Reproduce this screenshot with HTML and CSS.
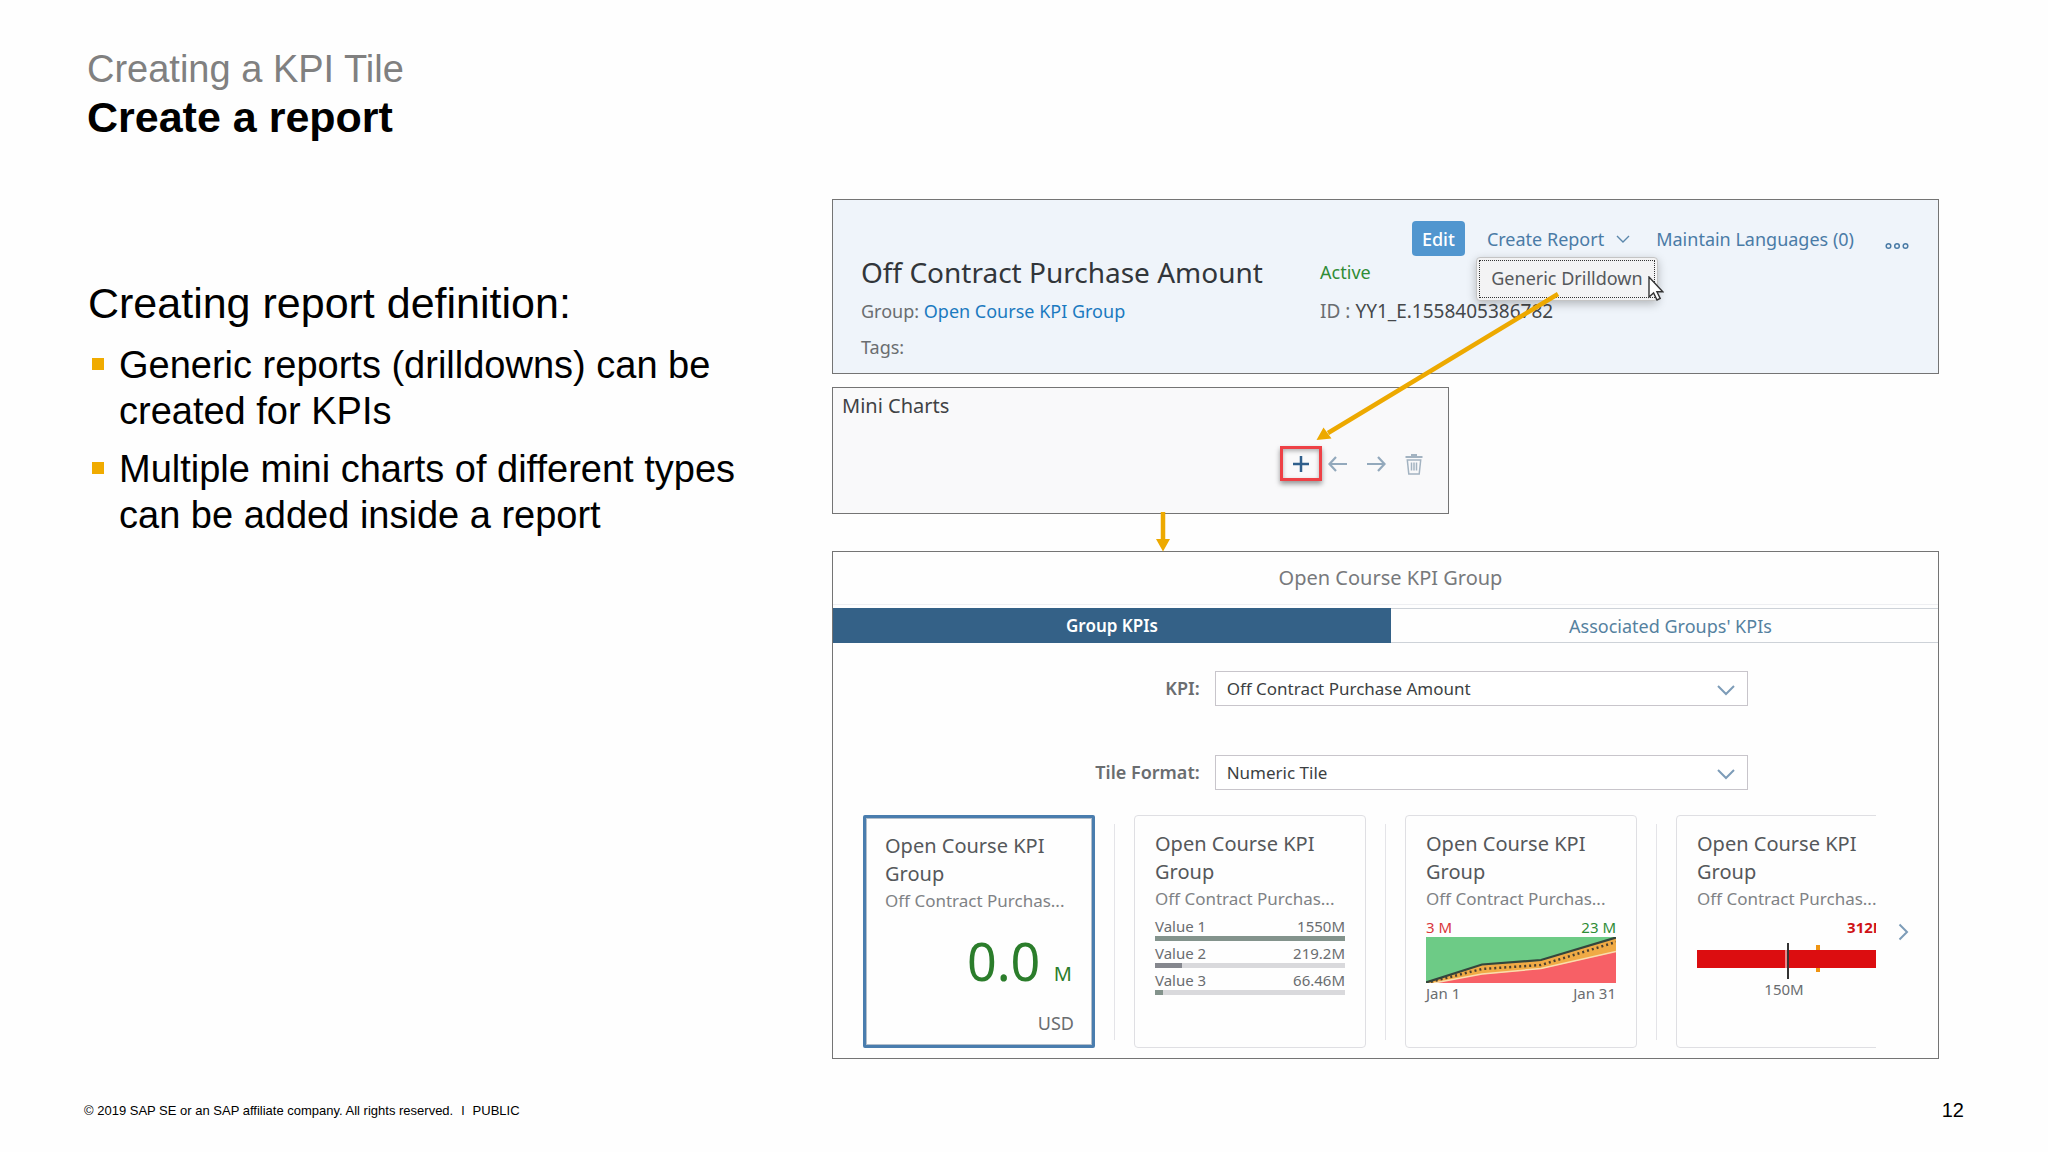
FILE: index.html
```html
<!DOCTYPE html>
<html lang="en">
<head>
<meta charset="utf-8">
<title>Creating a KPI Tile - Create a report</title>
<link rel="stylesheet" href="styles.css">
</head>
<body>
<main class="slide">
  <header class="slide-header">
    <p class="kicker">Creating a KPI Tile</p>
    <h1>Create a report</h1>
  </header>

  <div class="slide-body">
    <section class="notes">
      <h2>Creating report definition:</h2>
      <ul>
        <li>Generic reports (drilldowns) can be created for KPIs</li>
        <li>Multiple mini charts of different types can be added inside a report</li>
      </ul>
    </section>

    <div class="screens">
      <section class="panel kpi-header">
        <div class="toolbar">
          <button type="button" class="btn-edit">Edit</button>
          <div class="dropdown">
            <button type="button" class="btn-link">Create Report
              <svg width="14" height="8" viewBox="0 0 14 8"><path d="M1 1l6 6 6-6" fill="none" stroke="#5b87ab" stroke-width="1.4"/></svg>
            </button>
            <div class="menu">
              <button type="button" class="menu-item">Generic Drilldown</button>
              <svg class="cursor" width="16" height="25" viewBox="0 0 16 25"><path d="M1 1v20l4.6-4 3.4 7 3.2-1.500-3.300-6.800h5.900z" fill="#fff" stroke="#333" stroke-width="1.400"/></svg>
            </div>
          </div>
          <button type="button" class="btn-link btn-languages">Maintain Languages (0)</button>
          <button type="button" class="btn-link btn-more" aria-label="More">
            <svg width="24" height="8" viewBox="0 0 24 8" fill="none" stroke="#4a7ba6" stroke-width="1.500"><circle cx="3.500" cy="4" r="2.300"/><circle cx="12" cy="4" r="2.300"/><circle cx="20.500" cy="4" r="2.300"/></svg>
          </button>
        </div>
        <div class="kpi-facts">
          <h3>Off Contract Purchase Amount</h3>
          <span class="status">Active</span>
          <p>Group: <a href="#group">Open Course KPI Group</a></p>
          <p class="kpi-id">ID : <span class="dark">YY1_E.1558405386782</span></p>
          <p>Tags:</p>
        </div>
      </section>

      <section class="panel mini-charts">
        <h3>Mini Charts</h3>
        <div class="icon-bar">
          <button type="button" class="icon-btn add" aria-label="Add">
            <svg width="18" height="18" viewBox="0 0 18 18"><path d="M9 1v16M1 9h16" stroke="#2f5f8c" stroke-width="2.500"/></svg>
          </button>
          <button type="button" class="icon-btn" aria-label="Move left">
            <svg width="20" height="16" viewBox="0 0 20 16"><path d="M19 8H2M8 1L1.500 8 8 15" fill="none" stroke="#93a9bc" stroke-width="2.200"/></svg>
          </button>
          <button type="button" class="icon-btn" aria-label="Move right">
            <svg width="20" height="16" viewBox="0 0 20 16"><path d="M1 8h17M12 1l6.500 7L12 15" fill="none" stroke="#93a9bc" stroke-width="2.200"/></svg>
          </button>
          <button type="button" class="icon-btn" aria-label="Delete">
            <svg width="18" height="22" viewBox="0 0 18 22" fill="none" stroke="#a3b3c1" stroke-width="1.500"><path d="M.5 4h17M6 2h6" stroke-width="2"/><path d="M2.300 7l1.500 14h10.400l1.500-14zM6.500 9.500v8M9 9.500v8M11.500 9.500v8"/></svg>
          </button>
        </div>
      </section>

      <section class="panel tile-dialog">
        <h3>Open Course KPI Group</h3>
        <div class="tabs">
          <button type="button" class="tab active">Group KPIs</button>
          <button type="button" class="tab">Associated Groups' KPIs</button>
        </div>
        <form class="fields">
          <label for="kpi">KPI:</label>
          <div class="select">
            <select id="kpi"><option>Off Contract Purchase Amount</option></select>
            <svg width="18" height="11" viewBox="0 0 18 11"><path d="M1 1l8 8 8-8" fill="none" stroke="#7d9cb8" stroke-width="2"/></svg>
          </div>
          <label for="format">Tile Format:</label>
          <div class="select">
            <select id="format"><option>Numeric Tile</option></select>
            <svg width="18" height="11" viewBox="0 0 18 11"><path d="M1 1l8 8 8-8" fill="none" stroke="#7d9cb8" stroke-width="2"/></svg>
          </div>
        </form>

        <div class="carousel">
          <div class="track">
            <article class="card selected">
              <h4>Open Course KPI Group</h4>
              <p class="subtitle">Off Contract Purchas...</p>
              <p class="number">0.0 <span>M</span></p>
              <p class="currency">USD</p>
            </article>
            <span class="divider"></span>
            <article class="card">
              <h4>Open Course KPI Group</h4>
              <p class="subtitle">Off Contract Purchas...</p>
              <div class="bars">
                <p class="pair"><span>Value 1</span><span>1550M</span></p>
                <div class="bar"><i class="green" style="width:100%"></i></div>
                <p class="pair"><span>Value 2</span><span>219.2M</span></p>
                <div class="bar"><i style="width:14%"></i></div>
                <p class="pair"><span>Value 3</span><span>66.46M</span></p>
                <div class="bar"><i class="green" style="width:4%"></i></div>
              </div>
            </article>
            <span class="divider"></span>
            <article class="card">
              <h4>Open Course KPI Group</h4>
              <p class="subtitle">Off Contract Purchas...</p>
              <p class="pair top"><span class="red">3 M</span><span class="good">23 M</span></p>
              <svg class="area" viewBox="0 0 190 46" preserveAspectRatio="none">
                <rect width="190" height="46" fill="#6dcb86"/>
                <path d="M0 46L56 27.500 115 23 190 .5V46z" fill="#f0aa45"/>
                <path d="M8 46L56 37.500 115 32 190 15V46z" fill="#f76066"/>
                <path d="M8 46L56 37 115 31.500 190 14.500" fill="none" stroke="#fbdcae" stroke-width="1.500"/>
                <path d="M0 46L56 32 115 28 190 5" fill="none" stroke="#4b4030" stroke-width="2.500" stroke-dasharray="2 3"/>
                <path d="M0 45.500L56 27.500 115 23 190 .5" fill="none" stroke="#34453c" stroke-width="2.200"/>
              </svg>
              <p class="pair"><span>Jan 1</span><span>Jan 31</span></p>
            </article>
            <span class="divider"></span>
            <article class="card">
              <h4>Open Course KPI Group</h4>
              <p class="subtitle">Off Contract Purchas...</p>
              <p class="pair top actual"><span>312M</span></p>
              <svg class="bullet" viewBox="0 0 190 42" preserveAspectRatio="none">
                <rect x="119" y="8" width="4" height="27" fill="#ef9412"/>
                <rect y="13" width="190" height="18" fill="#dc0d10"/>
                <rect x="88" y="6" width="4" height="36" fill="#fff" opacity=".5"/>
                <rect x="90" y="6" width="2" height="36" fill="#333"/>
              </svg>
              <p class="target">150M</p>
            </article>
          </div>
          <button type="button" class="next" aria-label="Next tiles">
            <svg width="11" height="18" viewBox="0 0 11 18"><path d="M1.500 1.500L9 9l-7.500 7.500" fill="none" stroke="#7d9cb8" stroke-width="2"/></svg>
          </button>
        </div>
      </section>

      <svg class="arrows" viewBox="0 0 1107 360" aria-hidden="true">
        <path d="M726 95L496 234M331 313v32" stroke="#eda900" stroke-width="4.500"/>
        <path d="M484.500 241l7-12.500 8 11zM324 340h14l-7 12.500z" fill="#eda900"/>
      </svg>
    </div>
  </div>

  <footer>
    <p><span>© 2019 SAP SE or an SAP affiliate company. All rights reserved.</span><span>ǀ</span><span>PUBLIC</span></p>
    <span class="page-number">12</span>
  </footer>
</main>
</body>
</html>
```
FILE: styles.css
```css
* {
  box-sizing: border-box;
}

body,
h1,
h2,
h3,
h4,
p,
ul {
  margin: 0;
  padding: 0;
  font-weight: normal;
}

body {
  background: #fefefe;
  color: #000;
  font-family: "Liberation Sans", Arial, sans-serif;
}

button,
select {
  margin: 0;
  padding: 0;
  border: 0;
  background: none;
  font: inherit;
  color: inherit;
}

svg {
  display: block;
  flex: none;
}

.slide-header {
  padding: 46px 88px 57px 87px;
}

.kicker {
  color: #808080;
  font-size: 38px;
  line-height: 46px;
}

h1 {
  font-size: 43px;
  font-weight: bold;
  line-height: 50px;
}

.slide-body {
  display: grid;
  grid-template-columns: minmax(0, 2fr) minmax(0, 3fr);
  gap: 6px;
  padding: 0 109px 0 88px;
}

.notes {
  padding: 79px 40px 0 0;
}

.notes h2 {
  margin-bottom: 14px;
  font-size: 43px;
  line-height: 50px;
}

.notes ul {
  display: grid;
  gap: 12px;
  list-style: none;
}

.notes li {
  display: flex;
  gap: 15px;
  padding-left: 4px;
  font-size: 38px;
  line-height: 46px;
}

.notes li::before {
  content: "";
  flex: none;
  width: 12px;
  height: 12px;
  margin-top: 16px;
  background: #f0ab00;
}

/* Screens */

.screens {
  position: relative;
  font-family: "Noto Sans", sans-serif;
  font-size: 18px;
  color: #6a6d70;
}

.panel {
  border: 1px solid #747474;
}

.arrows {
  position: absolute;
  top: 0;
  left: 0;
  width: 100%;
  pointer-events: none;
}

.kpi-header {
  padding: 21px 29px 11px 28px;
  background: #eff4fa;
}

.toolbar {
  display: flex;
  justify-content: flex-end;
  gap: 22px;
}

.toolbar button {
  height: 35px;
}

.btn-edit {
  width: 53px;
  border-radius: 4px;
  background: #5196cf;
  color: #fff;
  font-weight: 500;
}

.btn-link {
  display: flex;
  align-items: center;
  gap: 12px;
  color: #4a7ba6;
}

.btn-languages {
  padding: 0 9px 0 4px;
}

.btn-more {
  padding-top: 14px;
}

.dropdown {
  position: relative;
}

.menu {
  position: absolute;
  top: 36px;
  left: -11px;
  padding: 2px;
  border: 1px solid #c4c4c4;
  border-radius: 4px;
  background: #f3f3f4;
  box-shadow: 0 3px 10px rgba(0, 0, 0, 0.25);
}

.toolbar .menu-item {
  width: 176px;
  height: 38px;
  padding-bottom: 2px;
  border: 1px dotted #333;
  color: #55585b;
  white-space: nowrap;
}

.cursor {
  position: absolute;
  right: -7px;
  bottom: -1px;
}

.kpi-facts {
  display: grid;
  grid-template-columns: 46fr 59fr;
  row-gap: 3px;
  padding-top: 1px;
  line-height: 30px;
}

.kpi-facts h3 {
  color: #32363a;
  font-size: 28px;
}

.kpi-facts a {
  color: #1b7ac0;
  text-decoration: none;
}

.status {
  color: #2f8c36;
}

.kpi-facts p {
  padding-top: 6px;
}

.kpi-facts p:last-child {
  padding-top: 3px;
}

.kpi-id {
  font-size: 19px;
}

.dark {
  color: #45484b;
}

.mini-charts {
  width: 55.7%;
  margin: 13px 0 37px;
  padding: 4px 15px 32px 9px;
  background: #f9f9fa;
}

.mini-charts h3 {
  margin-bottom: 26px;
  color: #3f4245;
  font-size: 20px;
  line-height: 28px;
}

.icon-bar {
  display: flex;
  justify-content: flex-end;
}

.icon-btn {
  display: grid;
  place-items: center;
  width: 38px;
  height: 35px;
}

.icon-btn.add {
  width: 42px;
  margin-right: -3px;
  border: 3px solid #ee4146;
  box-shadow: 0 3px 5px rgba(0, 0, 0, 0.4), inset 0 2px 4px rgba(0, 0, 0, 0.3);
}

.tile-dialog h3 {
  margin-bottom: 3px;
  padding-left: 10px;
  border-bottom: 1px solid #eeeff2;
  color: #77797c;
  font-size: 20px;
  line-height: 52px;
  text-align: center;
}

.tabs {
  display: grid;
  grid-template-columns: 51fr 50fr;
}

.tab {
  height: 35px;
  padding-left: 12px;
  border: 1px solid #cdd2d8;
  border-width: 1px 0;
  color: #55819f;
}

.tab.active {
  padding: 0;
  border-color: #346187;
  background: #346187;
  color: #fff;
  font-size: 17px;
  font-weight: 600;
}

.fields {
  display: grid;
  grid-template-columns: 366fr 532fr 175fr;
  gap: 49px 15px;
  padding: 28px 0 25px;
}

.fields label {
  grid-column: 1;
  font-weight: 600;
  line-height: 35px;
  text-align: right;
}

.select {
  display: grid;
  align-items: center;
}

.select select {
  grid-area: 1 / 1;
  width: 100%;
  height: 35px;
  padding: 0 11px;
  border: 1px solid #c8c5cb;
  border-radius: 0;
  background: #fff;
  color: #3c3f42;
  font-size: 17px;
  appearance: none;
}

.select svg {
  grid-area: 1 / 1;
  justify-self: end;
  margin: 4px 13px 0 0;
  pointer-events: none;
}

.carousel {
  display: flex;
  padding: 0 0 10px 30px;
}

.track {
  display: flex;
  flex: 1;
  gap: 19px;
  min-width: 0;
  overflow: hidden;
}

.divider {
  flex: none;
  width: 1px;
  margin: 9px 0 8px;
  background: #e4e4e8;
}

.next {
  display: grid;
  place-items: center;
  width: 62px;
  padding-right: 8px;
}

.card {
  display: flex;
  flex: none;
  flex-direction: column;
  width: 232px;
  height: 233px;
  padding: 14px 20px;
  border: 1px solid #dfdfe3;
  border-radius: 4px;
  font-size: 15px;
  line-height: 20px;
}

.card.selected {
  border: 3px solid #4a7dae;
  border-radius: 2px;
  box-shadow: inset 0 0 0 1px #b3bfcc;
  padding: 14px 18px 12px 19px;
}

.card h4 {
  padding-right: 20px;
  color: #55585b;
  font-size: 20px;
  line-height: 28px;
}

.subtitle {
  color: #7f8285;
  font-size: 17px;
  line-height: 26px;
  white-space: nowrap;
}

.number {
  padding: 16px 2px 0 0;
  color: #2b7d2b;
  font-size: 52px;
  line-height: 62px;
  text-align: right;
}

.number span {
  font-size: 20px;
}

.currency {
  margin-top: auto;
  font-size: 18px;
  text-align: right;
}

.bars {
  padding-top: 4px;
}

.pair {
  display: flex;
  justify-content: space-between;
}

.pair.top {
  padding-top: 5px;
}

.bar {
  height: 5px;
  margin-bottom: 2px;
  background: #d9d9dc;
}

.bar i {
  display: block;
  height: 100%;
  background: #85878e;
}

.bar .green {
  background: #83938c;
}

.red {
  color: #d9363c;
}

.good {
  color: #2f8c36;
}

.area {
  width: 100%;
  height: 46px;
}

.actual {
  justify-content: flex-end;
  color: #cf1216;
  font-weight: bold;
}

.bullet {
  width: 100%;
  height: 42px;
}

.target {
  padding-right: 16px;
  text-align: center;
}

footer {
  display: flex;
  align-items: center;
  justify-content: space-between;
  padding: 39px 84px 20px;
  font-size: 13px;
}

footer p {
  display: flex;
  gap: 8px;
}

.page-number {
  font-size: 20px;
  line-height: 24px;
}
```
